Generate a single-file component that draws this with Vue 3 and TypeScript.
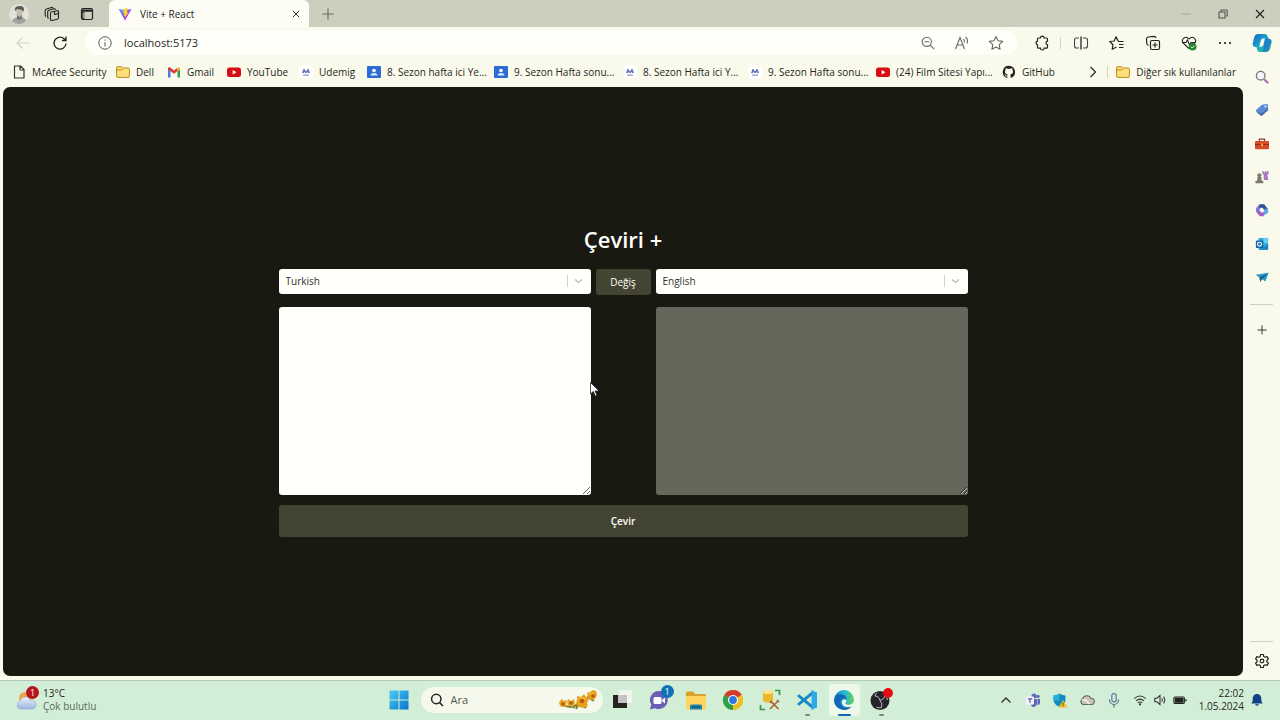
<script setup lang="ts">
import { ref } from 'vue'

interface Bookmark {
  icon: string
  label: string
}

const bookmarks: Bookmark[] = [
  { icon: 'file', label: 'McAfee Security' },
  { icon: 'folder', label: 'Dell' },
  { icon: 'gmail', label: 'Gmail' },
  { icon: 'youtube', label: 'YouTube' },
  { icon: 'udemig', label: 'Udemig' },
  { icon: 'classroom', label: '8. Sezon hafta ici Ye...' },
  { icon: 'classroom', label: '9. Sezon Hafta sonu...' },
  { icon: 'udemig', label: '8. Sezon Hafta ici Y...' },
  { icon: 'udemig', label: '9. Sezon Hafta sonu...' },
  { icon: 'youtube', label: '(24) Film Sitesi Yapı...' },
  { icon: 'github', label: 'GitHub' },
]

const tools = [
  { icon: 'split', label: 'Bölünmüş ekran' },
  { icon: 'favorites', label: 'Sık kullanılanlar' },
  { icon: 'collections', label: 'Koleksiyonlar' },
  { icon: 'heart', label: 'Tarayıcı temel bileşenleri' },
  { icon: 'dots', label: 'Ayarlar ve daha fazlası' },
]

const sideApps = [
  { icon: 'search-color', label: 'Arama' },
  { icon: 'tag', label: 'Alışveriş' },
  { icon: 'toolbox', label: 'Araçlar' },
  { icon: 'chess', label: 'Oyunlar' },
  { icon: 'm365', label: 'Microsoft 365' },
  { icon: 'outlook', label: 'Outlook' },
  { icon: 'plane', label: 'Drop' },
]

const taskApps = [
  { icon: 'taskview', label: 'Görev görünümü', state: '' },
  { icon: 'chat', label: 'Sohbet', state: '' },
  { icon: 'explorer', label: 'Dosya Gezgini', state: '' },
  { icon: 'chrome', label: 'Chrome', state: '' },
  { icon: 'sqltools', label: 'Araçlar', state: '' },
  { icon: 'vscode', label: 'Visual Studio Code', state: 'open' },
  { icon: 'edge', label: 'Microsoft Edge', state: 'active' },
  { icon: 'obs', label: 'OBS Studio', state: 'open' },
]

const tray = ['up', 'teams', 'shield', 'cloud', 'mic']

const languages = ['Turkish', 'English']
const source = ref('Turkish')
const target = ref('English')
const text = ref('')
const result = ref('')

function swap() {
  ;[source.value, target.value] = [target.value, source.value]
  ;[text.value, result.value] = [result.value, text.value]
}
</script>

<template>
  <div class="desktop">
    <svg class="sprite" aria-hidden="true">
      <defs>
        <linearGradient id="g-vite" x1="0" y1="0" x2="1" y2="1">
          <stop offset="0" stop-color="#41b8f5" /><stop offset=".6" stop-color="#a13cf0" /><stop offset="1" stop-color="#bd34fe" />
        </linearGradient>
        <linearGradient id="g-cop" x1="0" y1="0" x2="1" y2="1">
          <stop offset="0" stop-color="#1b5fc4" /><stop offset=".45" stop-color="#18a6c9" /><stop offset="1" stop-color="#35c88a" />
        </linearGradient>
        <linearGradient id="g-win" x1="0" y1="0" x2="1" y2="1">
          <stop offset="0" stop-color="#49cdf0" /><stop offset="1" stop-color="#0873ce" />
        </linearGradient>
        <linearGradient id="g-edge" x1="0" y1="0" x2="1" y2="0">
          <stop offset="0" stop-color="#1a7fd0" /><stop offset=".5" stop-color="#25b5d8" /><stop offset="1" stop-color="#5fd35f" />
        </linearGradient>
        <linearGradient id="g-cloud" x1="0" y1="0" x2="0" y2="1">
          <stop offset="0" stop-color="#eef4fd" /><stop offset="1" stop-color="#98b5df" />
        </linearGradient>
      </defs>

      <symbol id="avatar" viewBox="0 0 20 20">
        <circle cx="10" cy="10" r="10" fill="#e2e2da" />
        <path d="M3 17c1-3 4-3 5-4h5c2 1 4 2 4 4-4 4-10 4-14 0z" fill="#a3a39e" />
        <path d="M7 5h7l-1 7-2 3-3-2z" fill="#c4beb4" />
        <path d="M6 7c-1-4 2-5 5-5 4 0 5 3 3 6l-1-2-5-1z" fill="#5b5b57" />
        <path d="M8 11l3 2 2-2v3l-2 2-3-1z" fill="#77736c" />
      </symbol>
      <symbol id="workspaces" viewBox="0 0 16 16">
        <g fill="none" stroke="#222" stroke-width="1.1" stroke-linejoin="round">
          <path d="M7 6l6-1.300q1.300-.2 1.500 1v6q0 1.200-1.200 1.500L8 14.500q-1.500.3-1.500-1.200V7.500Q6.500 6.200 7 6z" />
          <path d="M4.500 12.500Q3.700 12 3.700 11V6q0-1.300 1.200-1.700l5-1.500q1.300-.3 1.600 1" /><path d="M2 10.500Q1.200 10 1.200 9V4.700Q1.200 3.300 2.500 3l5-1.500Q8.500 1.200 9 2.200" /><path d="M10.500 5.500v3l4-1" />
        </g>
      </symbol>
      <symbol id="tabs" viewBox="0 0 14 14">
        <rect x="1.500" y="1.500" width="11" height="11" rx="1.500" fill="none" stroke="#222" stroke-width="1.200" />
        <path d="M1.500 2.500h11v2.300h-11zM2 5h2.300v7H2z" fill="#222" /><path d="M2.700 5.800h1v5.500h-1z" fill="#cfcfc3" />
      </symbol>
      <symbol id="vite" viewBox="0 0 14 14">
        <path d="M.5 2L7 13.500 13.500 2 7.500 3z" fill="url(#g-vite)" /><path d="M9.500 1L5.500 2l-.3 4.500 1.300-.3-.5 3 1.200-.4-.5 2.500 3.800-6-1.600.3z" fill="#ffd020" />
      </symbol>
      <symbol id="close" viewBox="0 0 10 10"><path d="M1 1l8 8M9 1L1 9" fill="none" stroke="#222" stroke-width="1.200" /></symbol>
      <symbol id="plus" viewBox="0 0 12 12"><path d="M6 .5v11M.5 6h11" fill="none" stroke="currentColor" stroke-width="1.100" /></symbol>
      <symbol id="minimize" viewBox="0 0 10 10"><path d="M0 5h10" stroke="#aeaea2" stroke-width="1.200" /></symbol>
      <symbol id="restore" viewBox="0 0 10 10"><path d="M1 3h6v6H1zM3 2.500V1.500q0-.5.5-.5H8.500q.7 0 .7.700V6.500q0 .5-.5.5H8" fill="none" stroke="#555550" stroke-width="1.100" /></symbol>

      <symbol id="back" viewBox="0 0 14 14"><path d="M13.500 7H1M6.500 1.500L1 7l5.500 5.500" fill="none" stroke="#cfcfc6" stroke-width="1.200" /></symbol>
      <symbol id="refresh" viewBox="0 0 16 16"><path d="M14 8.500A6 6 0 1 1 11.800 3.500L14 5.500M14 1.500v4h-4" fill="none" stroke="#222" stroke-width="1.300" /></symbol>
      <symbol id="info" viewBox="0 0 14 14"><circle cx="7" cy="7" r="6.200" fill="none" stroke="#555550" /><path d="M7 6v4.500M7 3.500v1.200" stroke="#77776e" stroke-width="1.200" /></symbol>
      <symbol id="zoomout" viewBox="0 0 14 14"><g fill="none" stroke="#66665e" stroke-width="1.100"><circle cx="5.800" cy="5.800" r="4.600" /><path d="M9.200 9.200l4 4M3.500 5.800h4.600" /></g></symbol>
      <symbol id="readaloud" viewBox="0 0 16 16"><g fill="none" stroke="#66665e" stroke-width="1.100"><path d="M1.500 14L6 2.500 10.500 14M3.200 10h5.700M9.500 4q1.500 1.500.8 3.500M11.500 2q3 2.500 1.600 6.500" /></g></symbol>
      <symbol id="star" viewBox="0 0 16 16"><path d="M8 1.500l2 4.300 4.700.6-3.500 3.200.9 4.700L8 12l-4.100 2.300.9-4.700L1.300 6.400 6 5.800z" fill="none" stroke="#66665e" stroke-width="1.100" stroke-linejoin="round" /></symbol>
      <symbol id="extension" viewBox="0 0 16 16"><path d="M6.500 3a1.800 1.800 0 0 1 3.600 0H12.500q1 0 1 1v2.200a1.900 1.900 0 0 0 0 3.700v2.300q0 1-1 1H10.100a1.800 1.800 0 0 1-3.600 0H4.500q-1 0-1-1V9.900a1.900 1.900 0 0 1 0-3.700V4q0-1 1-1z" fill="none" stroke="#222" stroke-width="1.200" /></symbol>
      <symbol id="split" viewBox="0 0 16 16"><path d="M6 3H3.500q-2 0-2 2v6q0 2 2 2H6M10 3h2.500q2 0 2 2v6q0 2-2 2H10" fill="none" stroke="#444" stroke-width="1.100" /><path d="M8 1.500v13" stroke="#222" stroke-width="1.300" /></symbol>
      <symbol id="favorites" viewBox="0 0 16 16"><path d="M14.500 6.500H9.500L7 1.800 5.200 6l-4.500.5L4 9.700l-.8 4.500L7.500 12M10 9.500h4.500M10 12.500h4.500" fill="none" stroke="#222" stroke-width="1.200" stroke-linejoin="round" /></symbol>
      <symbol id="collections" viewBox="0 0 16 16"><g fill="none" stroke="#222" stroke-width="1.200"><rect x="5.500" y="5.500" width="9" height="9" rx="1.500" /><path d="M10 7.500v5M7.500 10h5M3.500 10.500Q2 10 1.800 8.500L1.500 4q0-1.500 1.500-2l6-.7q1.700 0 2 1.700" /></g></symbol>
      <symbol id="heart" viewBox="0 0 16 16"><g fill="none" stroke="#222" stroke-width="1.100"><path d="M8 13.500L2 7.800C-.2 4.500 4.500-.2 8 4c3.500-4.200 8.200.5 6 3.800zM1 7.500h4L6.500 5l2 5L10 7.500h4" /></g><circle cx="11.700" cy="11.700" r="3.800" fill="#24852c" /><path d="M9.900 11.700l1.300 1.300 2.200-2.200" fill="none" stroke="#fff" /></symbol>
      <symbol id="dots" viewBox="0 0 16 16"><g fill="#222"><circle cx="3" cy="8" r="1.100" /><circle cx="8" cy="8" r="1.100" /><circle cx="13" cy="8" r="1.100" /></g></symbol>
      <symbol id="copilot" viewBox="0 0 20 20"><path d="M6 1h7q2 0 3 3l.7 2H18q2.500 1 1.500 4l-1.500 6q-1 3-4 3H8q-2.500 0-3-3l-.5-2H2.500Q0 13 .8 10L2 5q1-4 4-4z" fill="url(#g-cop)" /><path d="M9 7q.5-1.500 2-1.500h2L11.300 12q-.5 1.700-2 1.700H7.200z" fill="#f8f8ef" /><path d="M13 5.500h3q3.500.5 3 3l-2 7.500q-1 3-4 3H9q2 0 2.500-3z" fill="#1b6fd2" opacity=".7" /></symbol>

      <symbol id="file" viewBox="0 0 14 14"><path d="M2.500 1h6l3.500 3.500V13h-9.500zM8 1v4h4" fill="none" stroke="#333" stroke-width="1.200" stroke-linejoin="round" /></symbol>
      <symbol id="folder" viewBox="0 0 14 14"><path d="M.6 3q0-1.400 1.400-1.400h3L6.500 3H12q1.400 0 1.400 1.300V11q0 1.400-1.400 1.400H2Q.6 12.400.6 11z" fill="#ffe07a" stroke="#b68b1c" /><path d="M.8 5h4.500L7 3.500" fill="none" stroke="#b68b1c" /></symbol>
      <symbol id="gmail" viewBox="0 0 14 14"><path d="M1 3.500v9h2.500V6z" fill="#3f7ee8" /><path d="M13 3.500v9h-2.500V6z" fill="#2fa552" /><path d="M1 3q1-1.500 2.500-.3L7 5.500l3.500-2.800L10.500 6 7 8.700 3.500 6 1 4.500z" fill="#e0352b" /><path d="M10.500 2.700Q12 1.500 13 3v1.500L10.500 6z" fill="#f5b91a" /></symbol>
      <symbol id="youtube" viewBox="0 0 14 14"><rect x="0" y="2.500" width="14" height="9.500" rx="2.500" fill="#d90b16" /><path d="M5.700 5v4.500l3.800-2.200z" fill="#fff" /></symbol>
      <symbol id="udemig" viewBox="0 0 14 14"><rect width="14" height="14" rx="5" fill="#fff" /><path d="M3 8l1.500-4h1L6.500 6h1l1-2h1L11 8H9L8.500 6.700 7.700 8H6.300l-.8-1.300L5 8z" fill="#6674bd" /><path d="M4 9.500h6v1.200H4z" fill="#8c96c8" /></symbol>
      <symbol id="classroom" viewBox="0 0 14 14"><rect y="1" width="14" height="12" rx="1" fill="#2b6bd3" /><circle cx="7" cy="5.500" r="1.800" fill="#fff" /><path d="M3.500 10.500q0-2.500 3.500-2.500t3.500 2.500z" fill="#dce8ff" /></symbol>
      <symbol id="github" viewBox="0 0 16 16"><path fill="#24221f" d="M8 .8a7.200 7.200 0 0 0-2.300 14c.4.100.5-.2.500-.4v-1.300c-2 .4-2.400-.9-2.400-.9-.3-.8-.8-1.100-.8-1.100-.7-.4 0-.4 0-.4.700 0 1.100.7 1.100.7.700 1.100 1.700.8 2.100.6.100-.5.300-.8.500-1-1.600-.2-3.300-.8-3.300-3.500 0-.8.300-1.400.7-1.900 0-.2-.3-.9.100-1.900 0 0 .6-.2 2 .7a7 7 0 0 1 3.600 0c1.400-.9 2-.7 2-.7.400 1 .1 1.700.1 1.900.5.500.7 1.100.7 1.900 0 2.700-1.700 3.300-3.300 3.500.3.200.5.700.5 1.300v2c0 .2.100.5.500.4A7.200 7.200 0 0 0 8 .8z" /></symbol>
      <symbol id="chev-right" viewBox="0 0 8 12"><path d="M1.500 1l5 5-5 5" fill="none" stroke="#222" stroke-width="1.200" /></symbol>

      <symbol id="search-color" viewBox="0 0 16 16"><circle cx="6.500" cy="6.500" r="4.900" fill="#f6f6ff" stroke="#77776d" stroke-width="1.500" /><path d="M10.500 10.500l4.500 4.500" stroke="#a874b8" stroke-width="2.500" /></symbol>
      <symbol id="tag" viewBox="0 0 16 16"><path d="M8 2l5.500-1q1 0 1.200 1L15 8l-6.500 6q-1.200 1-2.300 0L1.500 10q-1-1 0-2.200z" fill="#5a8bd5" /><path d="M1.500 10l4.700 4q1.100 1 2.300 0L15 8v-2L7.500 12z" fill="#4667a9" /><circle cx="12" cy="4" r="1.200" fill="#eef" /></symbol>
      <symbol id="toolbox" viewBox="0 0 16 16"><path d="M5 5V2.500h6V5" fill="none" stroke="#8a392a" stroke-width="1.300" /><rect x="0" y="4.500" width="16" height="9.500" rx="1.500" fill="#d64b26" /><path d="M0 8h16v1.300H0z" fill="#9d2f18" /><path d="M7 7.500h2v3H7z" fill="#edb44d" /></symbol>
      <symbol id="chess" viewBox="0 0 16 16"><path d="M8.500 1h1.500v1.500h1.500V1h1.500v1.500H14V1h1.500v3.500l-1.300 1 1 6H10V5.500l-1.500-1z" fill="#a67abb" /><circle cx="5" cy="6" r="2.300" fill="#7c7c6b" /><path d="M2.500 8h5v1L7 10l1 2.500h1.500V15h-9v-2.500H2L3 10z" fill="#7c7c6b" /></symbol>
      <symbol id="m365" viewBox="0 0 16 16"><g fill="none" stroke-width="4"><path d="M3.500 10.500L3 7l3-3.600" stroke="#7c77d8" /><path d="M5 3.400h4.500L13 8" stroke="#314f94" /><path d="M13 6.500V10l-4.500 3" stroke="#68a4e4" /><path d="M10 13H6.500l-3-3.500" stroke="#a45cc4" /></g></symbol>
      <symbol id="outlook" viewBox="0 0 16 16"><rect x="4" y="1" width="11" height="13.500" rx="1" fill="#2baede" /><path d="M9.500 1H15v6H9.500z" fill="#64d0ee" /><path d="M4 14.500L15 8v6.500z" fill="#1a85c4" /><rect x="1" y="4" width="8.500" height="8.500" rx="1" fill="#126ba8" /><circle cx="5.200" cy="8.200" r="2.200" fill="none" stroke="#fff" stroke-width="1.300" /></symbol>
      <symbol id="plane" viewBox="0 0 16 16"><path d="M.5 5.500L15.500 3 12 13 8 10.500 6 13.500 5 8.500z" fill="#2a9dc9" /><path d="M5 8.500L15.500 3 8 10.500 6 13.500z" fill="#176286" /></symbol>
      <symbol id="gear" viewBox="0 0 16 16"><path d="M6.700 1.500h2.600l.5 2 1.300.7 2-.6 1.300 2.300-1.500 1.400v1.400l1.500 1.400-1.300 2.300-2-.6-1.300.7-.5 2H6.700l-.5-2-1.300-.7-2 .6-1.300-2.300 1.500-1.400V7.300L1.600 5.900l1.300-2.300 2 .6 1.300-.7z" fill="none" stroke="#222" stroke-width="1.200" stroke-linejoin="round" /><circle cx="8" cy="8" r="1.800" fill="none" stroke="#222" stroke-width="1.200" /></symbol>

      <symbol id="weather" viewBox="0 0 22 22"><circle cx="9" cy="9" r="6" fill="#f0a44a" /><path d="M5 20a4 4 0 0 1-1-7.800 5.500 5.500 0 0 1 10.500-.7A4.300 4.300 0 0 1 17 20z" fill="url(#g-cloud)" stroke="#91a9cc" stroke-width=".6" /></symbol>
      <symbol id="windows" viewBox="0 0 20 20"><path d="M.5.500h9v9h-9zM10.500.500h9v9h-9zM.5 10.500h9v9h-9zM10.500 10.500h9v9h-9z" fill="url(#g-win)" /></symbol>
      <symbol id="magnifier" viewBox="0 0 14 14"><circle cx="6.300" cy="6" r="4.700" fill="none" stroke="#222" stroke-width="1.500" /><path d="M9.500 9.500l3.500 3.500" stroke="#222" stroke-width="1.600" /></symbol>
      <symbol id="flowers" viewBox="0 0 38 20">
        <path d="M3 14q8 6 17 0t15-12M14 18l4-4M24 15l3 3M30 8l5 3M17 19l3-5" fill="none" stroke="#718536" stroke-width="2" />
        <path d="M0 12l3-3 2 2 3-1-1 4 1 2-4 1-3-1zM9 9l3 2 3-2 1 4-2 4-4-1-2-3zM18 6l4 1 3-3 2 3 3 2-2 4 1 3-5 2-4-1-3-3 1-4zM28 3l3-1 3-2 3 1 1 4-2 4-4 1-3-2z" fill="#e8a01d" />
        <g fill="#bd5a12"><circle cx="4" cy="14" r="1.800" /><circle cx="12" cy="13" r="1.700" /><circle cx="23" cy="11" r="2.300" /><circle cx="34" cy="6" r="1.800" /></g>
        <path d="M20 9l3-1 4 1M30 4l4-1" fill="none" stroke="#f7c735" />
      </symbol>
      <symbol id="taskview" viewBox="0 0 24 24"><rect x="9" y="2" width="13" height="13" rx="1" fill="#f4f4ee" /><path d="M3 7h5v8h9v5H3z" fill="#24231f" /><path d="M8 7h9v8H8z" fill="#c4c1c7" /></symbol>
      <symbol id="chat" viewBox="0 0 24 24"><path d="M12 3a9 9 0 1 1-4 17.200L3 21.500l1.200-5A9 9 0 0 1 12 3z" fill="#6c5eb5" /><rect x="6.500" y="9" width="8" height="7" rx="1.500" fill="#fff" /><path d="M15 12l3-2.500v6L15 13z" fill="#fff" /></symbol>
      <symbol id="explorer" viewBox="0 0 24 24"><path d="M2 5q0-1.500 1.500-1.500H9L11 6h9.500Q22 6 22 7.500V20H2z" fill="#d9a12b" /><path d="M2 8h20v12q0 1.500-1.500 1.500h-17Q2 21.500 2 20z" fill="#ffd45e" /><path d="M6 21.500V18q0-1.500 1.500-1.500h9Q18 16.500 18 18v3.500z" fill="#1c83a6" /><path d="M8 19h8" stroke="#0c577c" stroke-width="1.500" /></symbol>
      <symbol id="chrome" viewBox="0 0 24 24"><circle cx="12" cy="12" r="10" fill="#e0b31c" /><path d="M12 12L3.300 7A10 10 0 0 1 20.700 7z" fill="#d53a2c" /><path d="M12 12L3.300 7A10 10 0 0 0 12 22l4.500-7.500z" fill="#32a04a" /><path d="M12 12l8.700-5A10 10 0 0 1 12 22z" fill="#edc025" /><circle cx="12" cy="12" r="5" fill="#fff" /><circle cx="12" cy="12" r="3.900" fill="#3175dc" /></symbol>
      <symbol id="sqltools" viewBox="0 0 24 24"><path d="M5 4q5-3 10 0v9q-5 3-10 0z" fill="#e9b82b" /><ellipse cx="10" cy="4" rx="5" ry="2" fill="#ffe48d" /><path d="M17 2.500h4.500V7M2.500 17v4.500H7" fill="none" stroke="#319947" stroke-width="1.700" /><path d="M12.500 13l8 8M20 13l-8 8M12 15l2-2M19 12l2 2" stroke="#a7632e" stroke-width="1.700" /></symbol>
      <symbol id="vscode" viewBox="0 0 24 24"><path d="M2 8l2-1.700L18 17.500v4L3 9z" fill="#1689c6" /><path d="M2 16l2 1.700L18 6.500v-4L3 15z" fill="#1689c6" /><path d="M16.500 2L22 4.500v15L16.500 22z" fill="#30a8e8" /></symbol>
      <symbol id="edge" viewBox="0 0 24 24"><circle cx="12" cy="12" r="10" fill="url(#g-edge)" /><path d="M2.200 13C2 7 7 5.500 10 6.500c4 1 5 4 4.500 6-1-3-6-2.500-6 1.500 0 5 6 7 11 4.500A10 10 0 0 1 2.200 13z" fill="#1266b5" /><path d="M14.500 12.500c-.5 2-1.500 2-1 3.200 1.500 2 7 1.200 8.400-2 0 2-1 3.500-2 4.500-4 2-9.500.5-10-3.700 0-3.300 3.500-4 4.600-2z" fill="#f5f7ed" /></symbol>
      <symbol id="obs" viewBox="0 0 24 24"><circle cx="11" cy="12.500" r="9.500" fill="#25242a" /><g fill="none" stroke="#bcbcbc" stroke-width="1"><path d="M11 12.500q-1-4.500-5-4.500M11 12.500q4.500-1 5-5M11 12.500q3 3 1.500 7M6 8q0-2 2-3M16 8q2 1 2.500 4M12.500 19.500q-2.500 1-5-.5" /></g><circle cx="19" cy="5" r="4.900" fill="#e20c12" /></symbol>
      <symbol id="up" viewBox="0 0 16 16"><path d="M3.500 10.500L8 6l4.500 4.500" fill="none" stroke="#333" stroke-width="1.300" /></symbol>
      <symbol id="teams" viewBox="0 0 16 16"><circle cx="9" cy="4" r="2.500" fill="#6267bb" /><circle cx="13" cy="4.500" r="1.700" fill="#6267bb" /><path d="M6 7h6v5q-1 3-3.500 3T6 12zM12.500 7H15v4q0 2-2.500 2z" fill="#6267bb" /><rect x="1" y="4.500" width="8" height="8" rx="1" fill="#f5f5ff" /><path d="M2.800 6.800h4.500M5 7v4" stroke="#555aa7" stroke-width="1.200" /></symbol>
      <symbol id="shield" viewBox="0 0 16 16"><path d="M7.500 1.500q3 2 6 2v4q0 5-6 7.500-6-2.500-6-7.500v-4q3 0 6-2z" fill="#1389c3" /><path d="M7.500 1.500v7h-6v-5q3 0 6-2z" fill="#24b3d6" /><path d="M11 8l4.500 7.500h-9z" fill="#f4bd2c" /><path d="M11 10.500v2.300M11 13.500v1" stroke="#4c3e12" /></symbol>
      <symbol id="cloud" viewBox="0 0 16 16"><path d="M4 12.500a3 3 0 0 1-.5-5.500A4.500 4.500 0 0 1 12 6.500a3 3 0 0 1 .5 6z" fill="#c9c5bb" stroke="#67655f" stroke-width="1.100" /><path d="M3 8q4-1 7 4" fill="none" stroke="#f6f3ea" stroke-width="1.500" /></symbol>
      <symbol id="mic" viewBox="0 0 16 16"><rect x="5.800" y="1.500" width="4.400" height="8.500" rx="2.200" fill="#cce3ee" stroke="#52758a" stroke-width="1.100" /><path d="M3.500 7.500V8a4.500 4.500 0 0 0 9 0v-.5M8 12.500v3" fill="none" stroke="#52758a" stroke-width="1.200" /></symbol>
      <symbol id="wifi" viewBox="0 0 16 16"><path d="M1.500 6.500q6.500-6 13 0M3.500 9q4.500-4 9 0M5.500 11.300q2.500-2.200 5 0" fill="none" stroke="#333" stroke-width="1.200" /><circle cx="8" cy="13" r="1.200" fill="#333" /></symbol>
      <symbol id="speaker" viewBox="0 0 16 16"><path d="M2 6h2.500L8 2.800v10.400L4.500 10H2zM10 6q1.500 2 0 4M12 4.200q3 3.800 0 7.600" fill="none" stroke="#333" stroke-width="1.200" /></symbol>
      <symbol id="battery" viewBox="0 0 16 16"><rect x="1" y="4.500" width="12" height="7.500" rx="1.500" fill="none" stroke="#222" stroke-width="1.200" /><path d="M2 5.500h10V11H2zM14 7h1.500v2.500H14z" fill="#222" /></symbol>
      <symbol id="bell" viewBox="0 0 14 14"><path d="M7 1a4.300 4.300 0 0 1 4.300 4.300V8l1.400 2.500H1.300L2.700 8V5.300A4.300 4.300 0 0 1 7 1zM5 11.300h4q-2 3-4 0z" fill="#123f87" /></symbol>
    </svg>

    <header class="tabstrip">
      <button class="cell" aria-label="Profil"><svg class="i20"><use href="#avatar" /></svg></button>
      <button class="cell" aria-label="Çalışma alanları"><svg class="i16"><use href="#workspaces" /></svg></button>
      <button class="cell" aria-label="Sekme eylemleri"><svg class="i14"><use href="#tabs" /></svg></button>
      <div class="tab">
        <svg class="i14"><use href="#vite" /></svg>
        <span>Vite + React</span>
        <button aria-label="Sekmeyi kapat"><svg class="i8"><use href="#close" /></svg></button>
      </div>
      <button class="cell grey" aria-label="Yeni sekme"><svg class="i12"><use href="#plus" /></svg></button>
      <div class="spacer"></div>
      <button class="cell" aria-label="Küçült"><svg class="i10"><use href="#minimize" /></svg></button>
      <button class="cell" aria-label="Geri yükle"><svg class="i10"><use href="#restore" /></svg></button>
      <button class="cell" aria-label="Kapat"><svg class="i10"><use href="#close" /></svg></button>
    </header>

    <nav class="toolbar">
      <button class="cell" aria-label="Geri"><svg class="i14"><use href="#back" /></svg></button>
      <button class="cell" aria-label="Yenile"><svg class="i16"><use href="#refresh" /></svg></button>
      <div class="address">
        <svg class="i14"><use href="#info" /></svg>
        <input type="text" value="localhost:5173" aria-label="Adres" />
        <button aria-label="Uzaklaştır"><svg class="i14"><use href="#zoomout" /></svg></button>
        <button aria-label="Sesli oku"><svg class="i16"><use href="#readaloud" /></svg></button>
        <button aria-label="Sık kullanılanlara ekle"><svg class="i16"><use href="#star" /></svg></button>
      </div>
      <button class="cell" aria-label="Uzantılar"><svg class="i16"><use href="#extension" /></svg></button>
      <i class="divider"></i>
      <button v-for="t in tools" :key="t.icon" class="tool" :aria-label="t.label">
        <svg class="i16"><use :href="'#' + t.icon" /></svg>
      </button>
      <button class="cell" aria-label="Copilot"><svg class="i20"><use href="#copilot" /></svg></button>
    </nav>

    <div class="body">
      <nav class="bookmarks">
        <div class="links">
          <a v-for="(b, i) in bookmarks" :key="i" href="#">
            <svg class="i14"><use :href="'#' + b.icon" /></svg><span>{{ b.label }}</span>
          </a>
        </div>
        <button class="more" aria-label="Diğer"><svg class="i12"><use href="#chev-right" /></svg></button>
        <i class="divider"></i>
        <a class="others" href="#"><svg class="i14"><use href="#folder" /></svg><span>Diğer sık kullanılanlar</span></a>
      </nav>

      <main class="page">
        <div class="translator">
          <h1>Çeviri +</h1>
          <div class="row">
            <div class="select">
              <select v-model="source" aria-label="Kaynak dil"><option v-for="l in languages" :key="l">{{ l }}</option></select>
              <svg class="arrow" viewBox="0 0 24 12"><path d="M.5 0v12" stroke="#d2d2cb" /><path d="M8 4.500l3.500 3 3.500-3" fill="none" stroke="#bcbcb2" stroke-width="1.300" /></svg>
            </div>
            <button class="swap" @click="swap">Değiş</button>
            <div class="select">
              <select v-model="target" aria-label="Hedef dil"><option v-for="l in languages" :key="l">{{ l }}</option></select>
              <svg class="arrow" viewBox="0 0 24 12"><path d="M.5 0v12" stroke="#d2d2cb" /><path d="M8 4.500l3.500 3 3.500-3" fill="none" stroke="#bcbcb2" stroke-width="1.300" /></svg>
            </div>
          </div>
          <div class="row areas">
            <textarea v-model="text" aria-label="Metin"></textarea>
            <span></span>
            <textarea v-model="result" class="result" aria-label="Çeviri sonucu" disabled></textarea>
          </div>
          <button class="submit">Çevir</button>
          <svg class="cursor" viewBox="0 0 10 15"><path d="M.5.500v11.500l2.800-2.500 1.900 4.500 1.800-.8-1.900-4.200H9z" fill="#fff" stroke="#222" stroke-width=".8" /></svg>
        </div>
      </main>

      <aside class="sidebar">
        <div class="apps">
          <button v-for="s in sideApps" :key="s.icon" :aria-label="s.label"><svg class="i14"><use :href="'#' + s.icon" /></svg></button>
        </div>
        <hr />
        <button class="add" aria-label="Özelleştir"><svg class="i10"><use href="#plus" /></svg></button>
        <div class="spacer"></div>
        <hr />
        <button class="settings" aria-label="Ayarlar"><svg class="i16"><use href="#gear" /></svg></button>
      </aside>
    </div>

    <footer class="taskbar">
      <button class="weather">
        <span class="wicon"><svg><use href="#weather" /></svg><b class="badge">1</b></span>
        <span class="lines"><span>13°C</span><span class="muted">Çok bulutlu</span></span>
      </button>
      <div class="center">
        <button class="app" aria-label="Başlat"><svg class="i20"><use href="#windows" /></svg></button>
        <label class="search">
          <svg class="i14"><use href="#magnifier" /></svg>
          <input type="text" placeholder="Ara" aria-label="Ara" />
          <svg class="flowers"><use href="#flowers" /></svg>
        </label>
        <button v-for="a in taskApps" :key="a.icon" class="app" :class="a.state" :aria-label="a.label">
          <svg class="i24"><use :href="'#' + a.icon" /></svg>
          <b v-if="a.icon === 'chat'" class="badge blue">1</b>
        </button>
      </div>
      <div class="tray">
        <button v-for="t in tray" :key="t" :aria-label="t"><svg class="i16"><use :href="'#' + t" /></svg></button>
        <button class="status" aria-label="Ağ, ses, pil">
          <svg class="i14"><use href="#wifi" /></svg><svg class="i14"><use href="#speaker" /></svg><svg class="i14"><use href="#battery" /></svg>
        </button>
        <button class="clock"><span>22:02</span><span>1.05.2024</span></button>
        <button class="bell" aria-label="Bildirimler"><svg class="i14"><use href="#bell" /></svg></button>
      </div>
    </footer>
  </div>
</template>

<style>
body {
  margin: 0;
}
</style>

<style scoped>
.desktop {
  height: 100vh;
  display: flex;
  flex-direction: column;
  background: #fafaec;
  color: #262622;
  font-family: 'Segoe UI', 'Open Sans', 'Noto Sans', sans-serif;
  font-size: 10px;
  overflow: hidden;
}
.desktop *,
.desktop *::before,
.desktop *::after {
  box-sizing: border-box;
}
.sprite {
  position: absolute;
  width: 0;
  height: 0;
}
svg {
  display: block;
  flex: none;
}
button,
input,
select,
textarea {
  font: inherit;
  color: inherit;
  border: 0;
  padding: 0;
  margin: 0;
  background: none;
}
button {
  display: flex;
  align-items: center;
  justify-content: center;
}
a {
  color: inherit;
  text-decoration: none;
}
.i8 { width: 8px; height: 8px; }
.i10 { width: 10px; height: 10px; }
.i12 { width: 12px; height: 12px; }
.i14 { width: 14px; height: 14px; }
.i16 { width: 16px; height: 16px; }
.i20 { width: 20px; height: 20px; }
.i24 { width: 24px; height: 24px; }
.spacer {
  flex: 1;
}
.cell {
  width: 37px;
  height: 100%;
  flex: none;
}
.tool {
  width: 36px;
  height: 100%;
  flex: none;
}
.divider {
  width: 1px;
  height: 12px;
  background: #d3d3c6;
  flex: none;
}

.tabstrip {
  height: 27px;
  flex: none;
  display: flex;
  align-items: center;
  padding-right: 2px;
  background: #cecebe;
}
.tabstrip > .cell:first-child {
  margin-right: -4px;
}
.tabstrip > .cell:nth-child(2) {
  margin-right: -2px;
}
.tab {
  width: 200px;
  height: 100%;
  margin-left: 4px;
  padding: 0 9px;
  display: flex;
  align-items: center;
  gap: 8px;
  background: #fdfdf6;
  border-radius: 6px 6px 0 0;
}
.tab span {
  flex: 1;
}
.grey {
  color: #66665e;
}

.toolbar {
  height: 31px;
  flex: none;
  display: flex;
  align-items: center;
  padding-left: 4px;
}
.toolbar .divider {
  margin: 0 2px 0 0;
}
.address {
  flex: 1;
  height: 25px;
  margin: 0 6px 0 7px;
  padding: 0 4px 0 13px;
  display: flex;
  align-items: center;
  background: #fffffa;
  border-radius: 13px;
}
.address input {
  flex: 1;
  min-width: 0;
  margin-left: 12px;
  font-size: 11px;
  outline: 0;
}
.address button {
  width: 34px;
  height: 100%;
}

.body {
  flex: 1;
  min-height: 0;
  display: grid;
  grid-template-columns: minmax(0, 1fr) 37px;
  grid-template-rows: 29px minmax(0, 1fr);
}
.bookmarks {
  display: flex;
  align-items: center;
  padding: 0 7px 1px 12px;
  white-space: nowrap;
}
.links {
  flex: 1;
  min-width: 0;
  display: grid;
  grid-template-columns: 104px 51px 60px 72px 68px 127px 129px 125px 128px 126px 1fr;
}
.bookmarks a {
  display: flex;
  align-items: center;
  gap: 6px;
}
.more {
  width: 20px;
  margin-right: 4px;
}
.others {
  margin-left: 8px;
}
.page {
  grid-column: 1;
  margin: 0 0 4px 3px;
  padding: 0 12px;
  display: flex;
  align-items: center;
  justify-content: center;
  background: #191912;
  border-radius: 7px;
}
.translator {
  position: relative;
  width: 100%;
  max-width: 689px;
  color: #fffff8;
}
h1 {
  margin: 0 0 18px;
  font-size: 22px;
  line-height: 24px;
  font-weight: 600;
  text-align: center;
}
.row {
  display: grid;
  grid-template-columns: 1fr 55px 1fr;
  gap: 5px;
}
.select {
  position: relative;
  height: 25px;
  color: #30302b;
}
.select select {
  width: 100%;
  height: 100%;
  padding: 0 30px 0 7px;
  appearance: none;
  background: #fffffb;
  border-radius: 3px;
}
.arrow {
  position: absolute;
  right: 0;
  top: 6px;
  width: 24px;
  height: 12px;
  pointer-events: none;
}
.swap,
.submit {
  background: #444433;
  border-radius: 3px;
}
.swap {
  height: 26px;
}
.areas {
  margin-top: 12px;
}
textarea {
  display: block;
  width: 100%;
  height: 188px;
  padding: 7px;
  color: #222;
  background: #fffffb;
  border-radius: 3px;
}
.result {
  color-scheme: dark;
  background: #66665b;
}
.submit {
  width: 100%;
  height: 32px;
  margin-top: 10px;
  font-weight: 600;
}
.cursor {
  position: absolute;
  left: 311px;
  top: 155px;
  width: 10px;
  height: 15px;
}

.sidebar {
  grid-column: 2;
  grid-row: 1 / 3;
  display: flex;
  flex-direction: column;
  align-items: center;
  padding: 2px 0 6px;
}
.apps {
  height: 234px;
  display: flex;
  flex-direction: column;
}
.apps button {
  flex: 1;
  width: 37px;
}
.sidebar hr {
  width: 23px;
  height: 1px;
  margin: 10px 0 0;
  border: 0;
  background: #d0d0c4;
  flex: none;
}
.add {
  width: 37px;
  height: 30px;
  margin-top: 10px;
}
.settings {
  width: 37px;
  height: 26px;
  margin-top: 6px;
}

.taskbar {
  height: 40px;
  flex: none;
  display: grid;
  grid-template-columns: 1fr auto 1fr;
  align-items: center;
  padding-bottom: 2px;
  background: #d2eed6;
  border-top: 1px solid #b9c6bd;
}
.weather {
  justify-self: start;
  gap: 5px;
  padding-left: 16px;
  text-align: left;
}
.wicon {
  position: relative;
}
.wicon svg {
  width: 22px;
  height: 22px;
}
.badge {
  position: absolute;
  right: -1px;
  top: -3px;
  width: 13px;
  height: 13px;
  border-radius: 50%;
  background: #b3151d;
  color: #fff;
  font-size: 9px;
  line-height: 13px;
  font-weight: 400;
  text-align: center;
}
.lines,
.clock {
  display: flex;
  flex-direction: column;
  line-height: 13px;
}
.muted {
  color: #5c6a5c;
}
.center {
  display: flex;
  align-items: center;
}
.app {
  position: relative;
  width: 37px;
  height: 32px;
}
.search {
  width: 182px;
  height: 26px;
  margin: 0 1px 0 3px;
  padding: 0 6px 0 9px;
  display: flex;
  align-items: center;
  background: #f4f9ec;
  border-radius: 13px;
}
.search input {
  flex: 1;
  min-width: 0;
  margin-left: 7px;
  font-size: 11px;
  outline: 0;
}
.search input::placeholder {
  color: #55554d;
  opacity: 1;
}
.flowers {
  width: 38px;
  height: 20px;
}
.blue {
  right: 4px;
  top: 1px;
  background: #0f71b5;
}
.active::before {
  content: '';
  position: absolute;
  inset: 0 3px;
  border-radius: 3px;
  background: #edf7ea;
}
.active svg {
  position: relative;
}
.open::after,
.active::after {
  content: '';
  position: absolute;
  bottom: 0;
  width: 5px;
  height: 2px;
  border-radius: 1px;
  background: #7c877b;
}
.active::after {
  width: 13px;
  background: #0f66ab;
}
.tray {
  height: 100%;
  justify-self: end;
  display: flex;
  align-items: center;
  padding-right: 10px;
}
.tray > button {
  height: 100%;
  width: 27px;
}
.tray > .status {
  width: 66px;
  gap: 6px;
}
.tray > .clock {
  width: 51px;
  align-items: flex-end;
}
.tray > .bell {
  width: 26px;
  justify-content: flex-end;
  padding-right: 6px;
}
</style>
